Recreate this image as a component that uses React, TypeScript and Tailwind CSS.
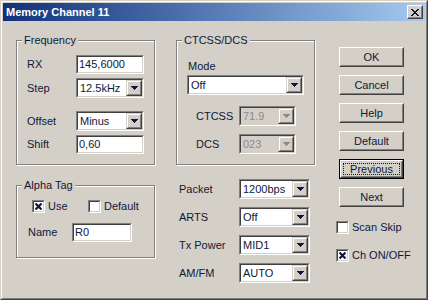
import React from "react";

const ink = "text-[#0f1838]";

function Sunken({
  className = "",
  inner = "bg-white",
  children,
}: {
  className?: string;
  inner?: string;
  children?: React.ReactNode;
}) {
  return (
    <div
      className={`border border-t-[#808080] border-l-[#808080] border-b-white border-r-white ${className}`}
    >
      <div
        className={`h-full w-full border border-t-[#404040] border-l-[#404040] border-b-[#d4d0c8] border-r-[#d4d0c8] ${inner}`}
      >
        {children}
      </div>
    </div>
  );
}

function Arrow({ color = "#0f1838" }: { color?: string }) {
  return (
    <svg width="7" height="4" viewBox="0 0 7 4">
      <path d="M0 0h7v1h-1v1h-1v1h-1v1h-1v-1h-1v-1h-1v-1h-1z" fill={color} />
    </svg>
  );
}

function TextBox({ value, className }: { value: string; className: string }) {
  return (
    <Sunken className={className}>
      <div className={`h-full flex items-center pl-[1px] ${ink}`}>{value}</div>
    </Sunken>
  );
}

function Combo({
  value,
  className,
  disabled = false,
}: {
  value: string;
  className: string;
  disabled?: boolean;
}) {
  return (
    <Sunken className={className} inner={disabled ? "bg-[#d4d0c8]" : "bg-white"}>
      <div className="h-full flex items-center">
        <div
          className={`flex-1 pl-[2px] ${disabled ? "text-[#8a8a8a]" : ink}`}
        >
          {value}
        </div>
        <div className="w-[16px] h-full border border-t-[#d4d0c8] border-l-[#d4d0c8] border-r-[#404040] border-b-[#404040]">
          <div className="h-full border border-t-white border-l-white border-r-[#808080] border-b-[#808080] bg-[#d4d0c8] flex items-center justify-center">
            <Arrow color={disabled ? "#8a8a8a" : "#0f1838"} />
          </div>
        </div>
      </div>
    </Sunken>
  );
}

function Group({
  label,
  className,
  children,
}: {
  label: string;
  className: string;
  children?: React.ReactNode;
}) {
  return (
    <div
      className={`relative border border-[#808080] shadow-[inset_1px_1px_0_#fff,1px_1px_0_#fff] ${className}`}
    >
      <div
        className={`absolute -top-[7px] left-[5px] bg-[#d4d0c8] px-[2px] leading-[13px] ${ink}`}
      >
        {label}
      </div>
      {children}
    </div>
  );
}

function Button({ label, focused = false }: { label: string; focused?: boolean }) {
  if (focused) {
    return (
      <div className="w-[65px] h-[20px] border border-black">
        <div className="h-full border border-t-white border-l-white border-r-[#404040] border-b-[#404040]">
          <div className="h-full border border-t-[#d4d0c8] border-l-[#d4d0c8] border-r-[#808080] border-b-[#808080] p-[1px]">
            <div
              className={`h-full border border-dotted border-[#0f1838] flex items-center justify-center ${ink}`}
            >
              {label}
            </div>
          </div>
        </div>
      </div>
    );
  }
  return (
    <div className="w-[65px] h-[20px] border border-t-white border-l-white border-r-[#404040] border-b-[#404040]">
      <div
        className={`h-full border border-t-[#d4d0c8] border-l-[#d4d0c8] border-r-[#808080] border-b-[#808080] flex items-center justify-center ${ink}`}
      >
        {label}
      </div>
    </div>
  );
}

function CheckBox({ checked, label }: { checked: boolean; label: string }) {
  return (
    <div className="flex items-center h-[13px]">
      <div className="w-[13px] h-[13px] border border-t-[#808080] border-l-[#808080] border-b-white border-r-white">
        <div className="h-full border border-t-[#404040] border-l-[#404040] border-b-[#d4d0c8] border-r-[#d4d0c8] bg-white flex items-center justify-center">
          {checked && (
            <svg width="7" height="7" viewBox="0 0 7 7">
              <path
                d="M0.5 0.5L6.5 6.5M6.5 0.5L0.5 6.5"
                stroke="#0f1838"
                strokeWidth="2.2"
              />
            </svg>
          )}
        </div>
      </div>
      <span className={`ml-[3px] ${ink}`}>{label}</span>
    </div>
  );
}

function Row({
  label,
  labelW,
  children,
  className = "",
}: {
  label: string;
  labelW: string;
  children: React.ReactNode;
  className?: string;
}) {
  return (
    <div className={`flex items-center h-[20px] ${className}`}>
      <div className={`${labelW} ${ink}`}>{label}</div>
      {children}
    </div>
  );
}

export default function App() {
  return (
    <div className="w-[428px] h-[300px] bg-[#d4d0c8] font-['Liberation_Sans',Arial,sans-serif] text-[11px] leading-[13px] border border-t-[#d4d0c8] border-l-[#d4d0c8] border-r-[#404040] border-b-[#404040]">
      <div className="h-full border border-t-white border-l-white border-r-[#808080] border-b-[#808080] p-[1px] flex flex-col">
        {/* title bar */}
        <div className="h-[18px] flex items-center bg-gradient-to-r from-[#12307a] to-[#a6caf0] pl-[3px] pr-[2px]">
          <div className="flex-1 text-white font-bold">Memory Channel 11</div>
          <div className="w-[16px] h-[14px] border border-t-white border-l-white border-r-[#404040] border-b-[#404040]">
            <div className="h-full border border-t-[#d4d0c8] border-l-[#d4d0c8] border-r-[#808080] border-b-[#808080] bg-[#d4d0c8] flex items-center justify-center">
              <svg width="8" height="7" viewBox="0 0 8 7">
                <path
                  d="M0 0h2v1h1v1h2v-1h1v-1h2v1h-1v1h-1v1h-1v1h1v1h1v1h1v1h-2v-1h-1v-1h-2v1h-1v1h-2v-1h1v-1h1v-1h1v-1h-1v-1h-1v-1h-1z"
                  fill="#0f1838"
                />
              </svg>
            </div>
          </div>
        </div>

        {/* body */}
        <div className="flex pl-[13px] pt-[19px]">
          {/* left column */}
          <div className="w-[140px] flex flex-col">
            <Group label="Frequency" className="w-[139px] h-[125px]">
              <div className="pl-[10px] pt-[13px]">
                <Row label="RX" labelW="w-[49px]">
                  <TextBox value="145,6000" className="w-[68px] h-[19px]" />
                </Row>
                <Row label="Step" labelW="w-[49px]" className="mt-[4px]">
                  <Combo value="12.5kHz" className="w-[68px] h-[20px]" />
                </Row>
                <Row label="Offset" labelW="w-[49px]" className="mt-[13px]">
                  <Combo value="Minus" className="w-[68px] h-[20px]" />
                </Row>
                <Row label="Shift" labelW="w-[49px]" className="mt-[3px]">
                  <TextBox value="0,60" className="w-[68px] h-[19px]" />
                </Row>
              </div>
            </Group>

            <Group label="Alpha Tag" className="w-[139px] h-[73px] mt-[20px]">
              <div className="pl-[15px] pt-[14px] flex">
                <div className="w-[56px]">
                  <CheckBox checked label="Use" />
                </div>
                <CheckBox checked={false} label="Default" />
              </div>
              <Row label="Name" labelW="w-[44px]" className="pl-[11px] mt-[9px]">
                <TextBox value="R0" className="w-[60px] h-[19px]" />
              </Row>
            </Group>
          </div>

          {/* middle column */}
          <div className="w-[140px] ml-[20px] flex flex-col">
            <Group label="CTCSS/DCS" className="w-[139px] h-[125px]">
              <div className={`ml-[11px] mt-[19px] ${ink}`}>Mode</div>
              <Combo value="Off" className="ml-[10px] mt-[2px] w-[117px] h-[20px]" />
              <Row label="CTCSS" labelW="w-[43px]" className="ml-[19px] mt-[11px]">
                <Combo value="71.9" disabled className="w-[57px] h-[20px]" />
              </Row>
              <Row label="DCS" labelW="w-[43px]" className="ml-[19px] mt-[8px]">
                <Combo value="023" disabled className="w-[57px] h-[20px]" />
              </Row>
            </Group>

            <div className="mt-[14px] pl-[3px] flex flex-col gap-[8px]">
              <Row label="Packet" labelW="w-[60px]">
                <Combo value="1200bps" className="w-[71px] h-[20px]" />
              </Row>
              <Row label="ARTS" labelW="w-[60px]">
                <Combo value="Off" className="w-[71px] h-[20px]" />
              </Row>
              <Row label="Tx Power" labelW="w-[60px]">
                <Combo value="MID1" className="w-[71px] h-[20px]" />
              </Row>
              <Row label="AM/FM" labelW="w-[60px]">
                <Combo value="AUTO" className="w-[71px] h-[20px]" />
              </Row>
            </div>
          </div>

          {/* right column */}
          <div className="ml-[20px] mt-[7px] flex flex-col">
            <div className="ml-[3px] flex flex-col gap-[8px]">
              <Button label="OK" />
              <Button label="Cancel" />
              <Button label="Help" />
              <Button label="Default" />
              <Button label="Previous" focused />
              <Button label="Next" />
            </div>
            <div className="mt-[14px]">
              <CheckBox checked={false} label="Scan Skip" />
            </div>
            <div className="mt-[15px]">
              <CheckBox checked label="Ch ON/OFF" />
            </div>
          </div>
        </div>
      </div>
    </div>
  );
}
